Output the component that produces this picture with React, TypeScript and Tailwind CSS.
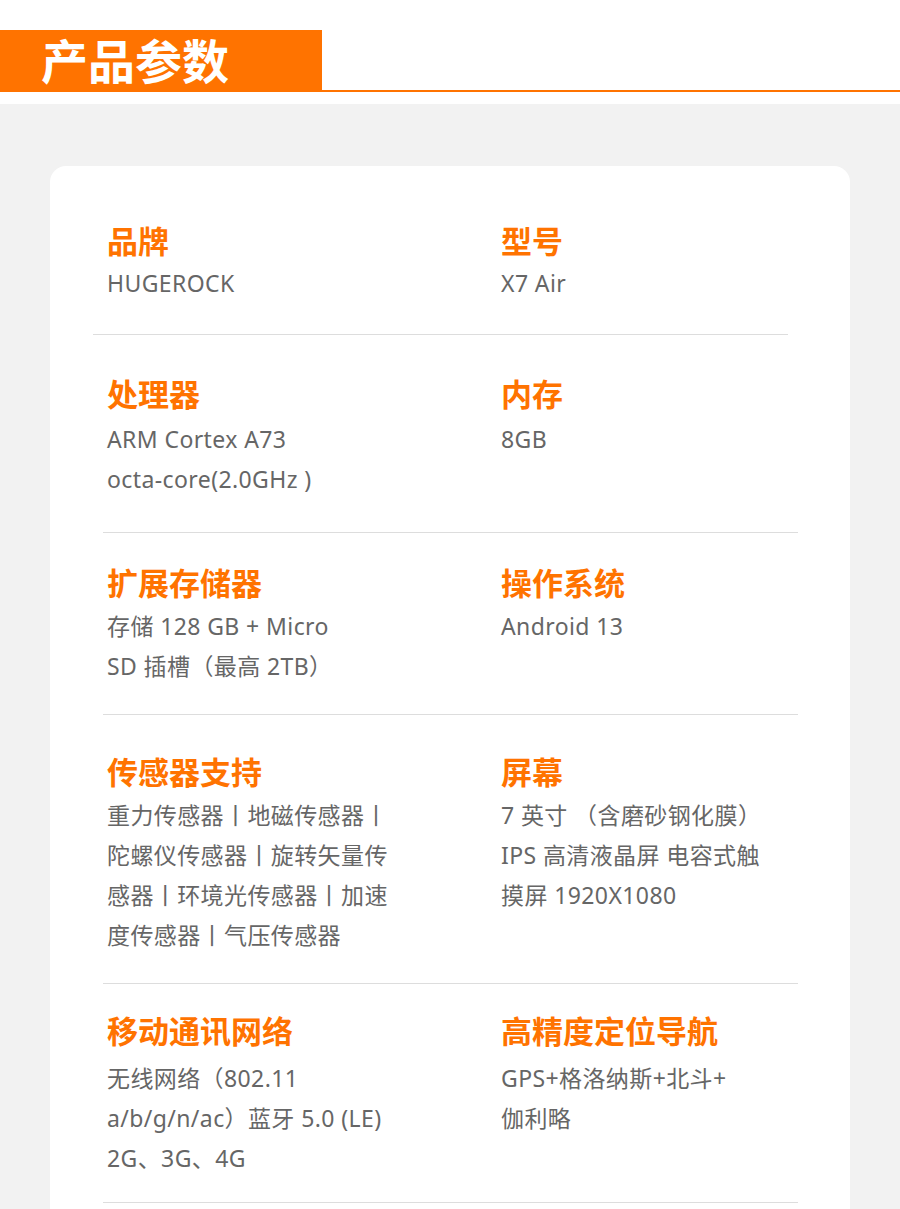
type Spec = { title: string; lines: string[] };

type Row = {
  left: Spec;
  right: Spec;
  pt: string;
  gap: string;
  pb: string;
  line: string;
};

const rows: Row[] = [
  {
    left: { title: '品牌', lines: ['HUGEROCK'] },
    right: { title: '型号', lines: ['X7 Air'] },
    pt: 'pt-[55px]',
    gap: 'mt-[2px]',
    pb: 'pb-[31px]',
    line: 'ml-[43px]',
  },
  {
    left: { title: '处理器', lines: ['ARM Cortex A73', 'octa-core(2.0GHz )'] },
    right: { title: '内存', lines: ['8GB'] },
    pt: 'pt-[39px]',
    gap: 'mt-[5px]',
    pb: 'pb-[33px]',
    line: 'ml-[53px]',
  },
  {
    left: { title: '扩展存储器', lines: ['存储 128 GB + Micro', 'SD 插槽（最高 2TB）'] },
    right: { title: '操作系统', lines: ['Android 13'] },
    pt: 'pt-[30px]',
    gap: 'mt-[3px]',
    pb: 'pb-[28px]',
    line: 'ml-[53px]',
  },
  {
    left: {
      title: '传感器支持',
      lines: ['重力传感器丨地磁传感器丨', '陀螺仪传感器丨旋转矢量传', '感器丨环境光传感器丨加速', '度传感器丨气压传感器'],
    },
    right: { title: '屏幕', lines: ['7 英寸 （含磨砂钢化膜）', 'IPS 高清液晶屏 电容式触', '摸屏 1920X1080'] },
    pt: 'pt-[37px]',
    gap: 'mt-[3px]',
    pb: 'pb-[28px]',
    line: 'ml-[53px]',
  },
  {
    left: { title: '移动通讯网络', lines: ['无线网络（802.11', 'a/b/g/n/ac）蓝牙 5.0 (LE)', '2G、3G、4G'] },
    right: { title: '高精度定位导航', lines: ['GPS+格洛纳斯+北斗+', '伽利略'] },
    pt: 'pt-[27px]',
    gap: 'mt-[7px]',
    pb: 'pb-[24px]',
    line: 'ml-[53px]',
  },
];

function Cell({ spec, gap }: { spec: Spec; gap: string }) {
  return (
    <div>
      <h3 className="text-[31px] leading-[40px] font-bold text-[#ff7300]">{spec.title}</h3>
      <div className={`${gap} text-[23px] leading-[40px] tracking-[0.4px] text-[#666666]`}>
        {spec.lines.map((l, i) => (
          <p key={i} className="whitespace-nowrap">{l}</p>
        ))}
      </div>
    </div>
  );
}

export default function App() {
  return (
    <div
      className="w-[900px] h-[1209px] overflow-hidden bg-[#f2f2f2]"
      style={{ fontFamily: '"Noto Sans", "Noto Sans CJK SC", sans-serif' }}
    >
      {/* header */}
      <div className="bg-white h-[104px] pt-[30px]">
        <div className="flex items-end">
          <div className="w-[322px] h-[62px] bg-[#ff7300] flex items-center pl-[41px]">
            <span className="text-[47px] leading-none font-bold text-white">产品参数</span>
          </div>
          <div className="flex-1 h-[2px] bg-[#ff7300]" />
        </div>
      </div>

      <div className="pt-[62px] px-[50px]">
        <div className="bg-white rounded-[16px] pb-[40px]">
          {rows.map((r, i) => (
            <div key={i}>
              <div className={`${r.pt} ${r.pb} pl-[57px] flex`}>
                <div className="w-[394px]">
                  <Cell spec={r.left} gap={r.gap} />
                </div>
                <div className="flex-1">
                  <Cell spec={r.right} gap={r.gap} />
                </div>
              </div>
              <div className={`${r.line} w-[695px] h-px bg-[#dddddd]`} />
            </div>
          ))}
        </div>
      </div>
    </div>
  );
}
